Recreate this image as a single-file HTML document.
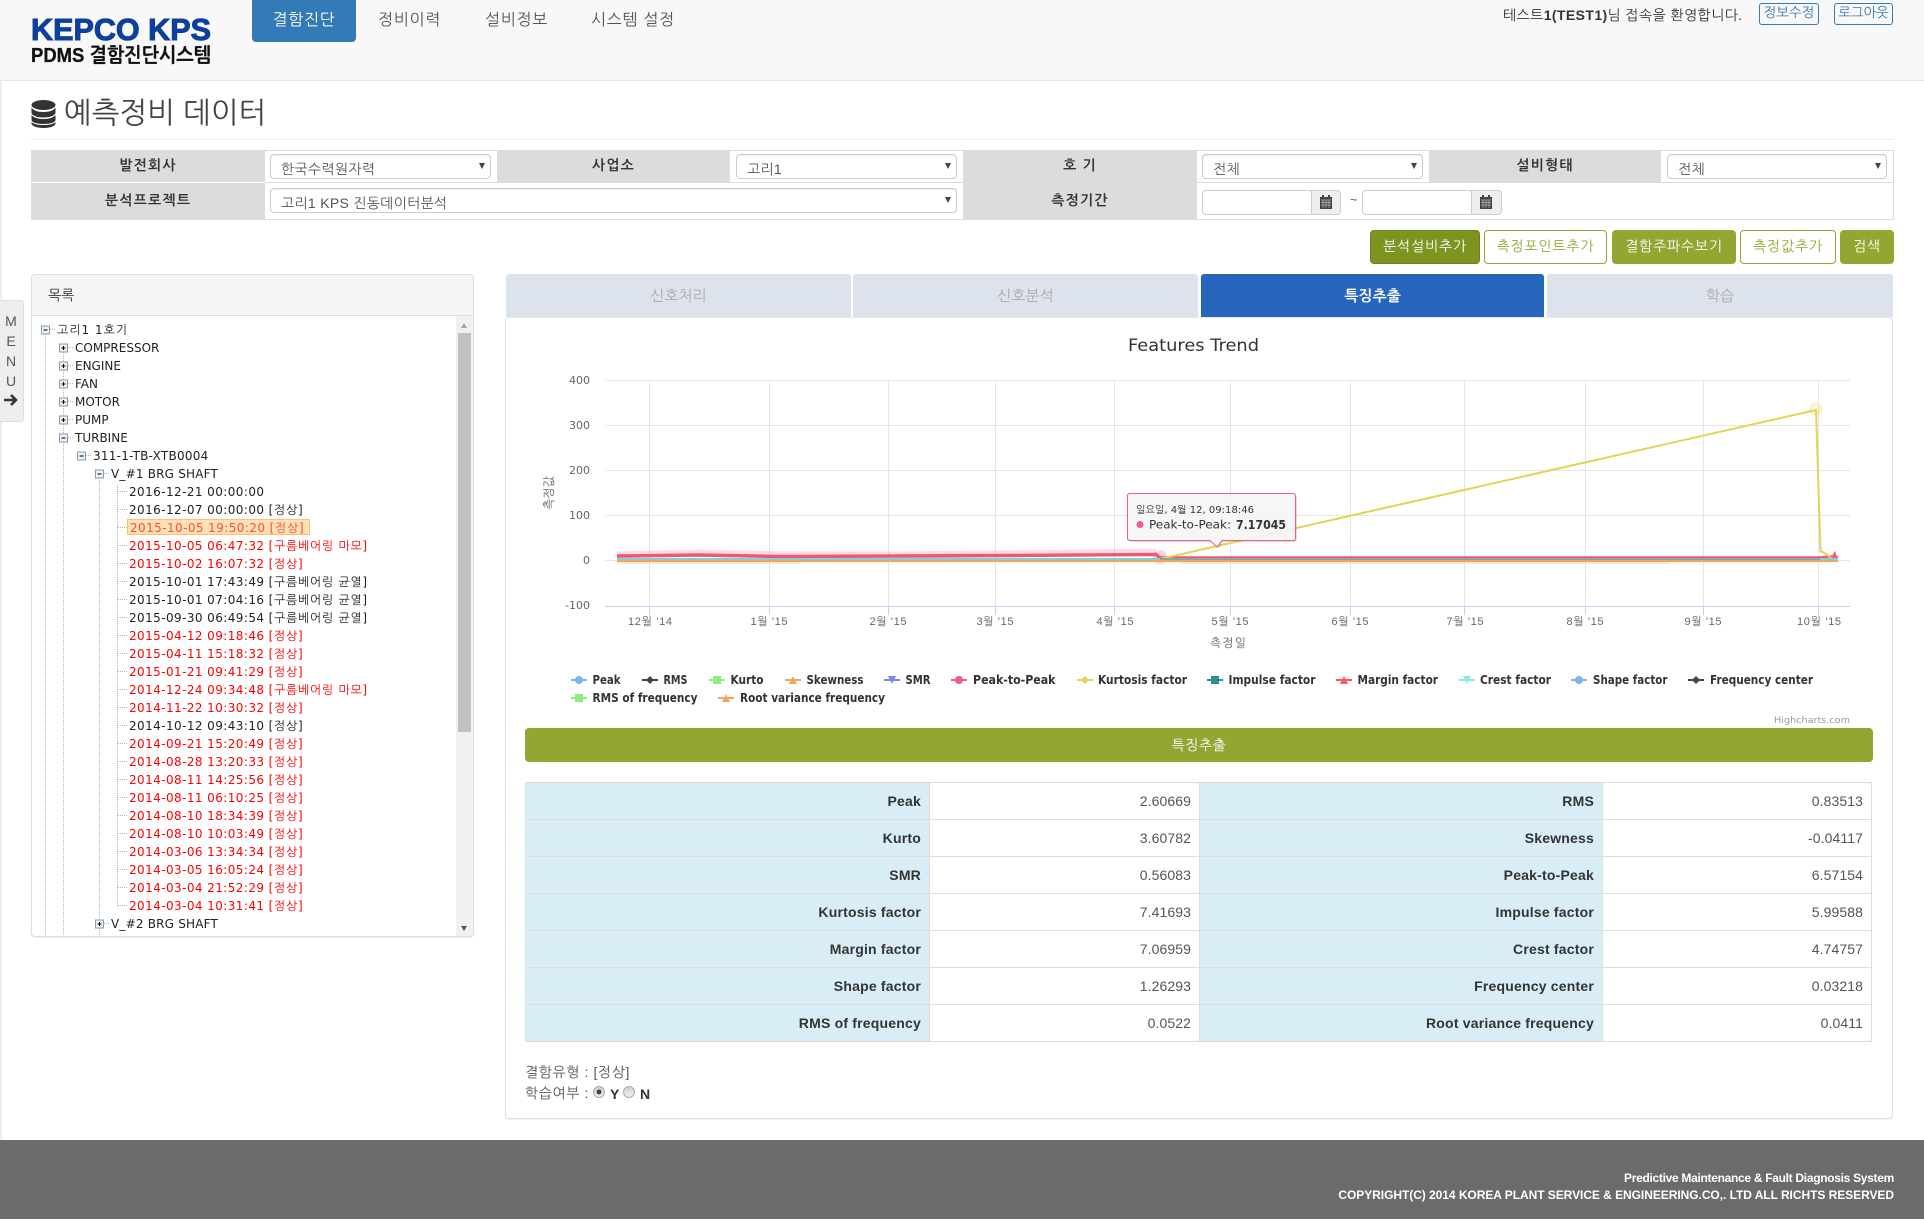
<!DOCTYPE html>
<html lang="ko">
<head>
<meta charset="utf-8">
<title>PDMS 결함진단시스템</title>
<style>
html,body{margin:0;padding:0;background:#fff}
body{width:1924px;height:1225px;position:relative;overflow:hidden;font-family:"Liberation Sans","NanumGothic","Noto Sans CJK KR",sans-serif;color:#333;font-size:14px}
.a{position:absolute;box-sizing:border-box;white-space:nowrap}
.c{text-align:center}
.lab{background:#dcdcdc;text-align:center;color:#333;font-weight:bold;font-size:14px;letter-spacing:1.2px}
.sel{background:#fff;border:1px solid #ccc;border-radius:4px;box-shadow:inset 0 1px 1px rgba(0,0,0,.08);height:25px;font-size:14px;letter-spacing:.3px;line-height:28px;padding-left:10px;color:#555}
.sel i{position:absolute;right:5px;top:8px;width:0;height:0;border-left:3px solid transparent;border-right:3px solid transparent;border-top:6px solid #444}
.btn{height:34px;border-radius:4px;border:1px solid #92a732;text-align:center;font-size:14px;letter-spacing:.8px;line-height:30px;top:230px}
.f{background:#92a732;color:#fff}
.o{background:#fff;color:#92a732}
.tab{top:274px;height:43px;background:#dde3ed;color:#aaa;text-align:center;font-size:15px;line-height:45px;border-radius:3px 3px 0 0}
.nav{font-size:16px;letter-spacing:.7px;line-height:22px;color:#555;top:10px}
.r{position:absolute;white-space:nowrap;font:12px/18px "DejaVu Sans","NanumGothic",sans-serif;color:#222;height:18px;transform:translateY(1px)}
.r:has(b){letter-spacing:.7px}
.r b{font-weight:normal;letter-spacing:.42px}
.red{color:#f00}
.th,.td{position:absolute;height:38px;border:1px solid #ddd;line-height:36px;text-align:right;padding-right:8px;box-sizing:border-box;white-space:nowrap}
.th{background:#d9edf7;font-weight:bold;color:#333;letter-spacing:.2px}
.td{background:#fff;color:#555;padding-right:8px;letter-spacing:.1px}
</style>
</head>
<body>
<!-- header -->
<div class="a" style="left:0;top:0;width:1924px;height:81px;background:#f8f8f8;border-bottom:1px solid #e7e7e7"></div>
<div class="a" style="left:0;top:81px;width:2px;height:1059px;background:#eee"></div>
<svg class="a" style="left:25px;top:10px" width="200" height="60">
<text x="6" y="30" font-family="Liberation Sans" font-weight="bold" font-size="31" fill="#0d3f9e" stroke="#0d3f9e" stroke-width="1" textLength="180" lengthAdjust="spacingAndGlyphs">KEPCO KPS</text>
<text x="6" y="52" font-family="Liberation Sans,NanumGothic,sans-serif" font-weight="bold" font-size="20" fill="#111" stroke="#111" stroke-width=".3" textLength="180" lengthAdjust="spacingAndGlyphs">PDMS 결함진단시스템</text>
</svg>
<div class="a c" style="left:252px;top:0;width:104px;height:42px;background:#337ab7;color:#fff;border-radius:0 0 4px 4px;font-size:16px;letter-spacing:.7px;line-height:42px">결함진단</div>
<div class="a nav" style="left:378px">정비이력</div>
<div class="a nav" style="left:485px">설비정보</div>
<div class="a nav" style="left:591px">시스템 설정</div>
<div class="a" style="left:1503px;top:6px;font-size:14px;letter-spacing:.4px;line-height:18px;color:#333">테스트<b>1(TEST1)</b>님 접속을 환영합니다.</div>
<div class="a c" style="left:1759px;top:3px;width:60px;height:22px;border:1px solid #337ab7;border-radius:3px;color:#337ab7;font-size:13.5px;line-height:17px">정보수정</div>
<div class="a c" style="left:1834px;top:3px;width:59px;height:22px;border:1px solid #337ab7;border-radius:3px;color:#337ab7;font-size:13.5px;line-height:17px">로그아웃</div>

<!-- title -->
<svg class="a" style="left:31px;top:100px" width="25" height="28" viewBox="0 0 25 28">
<ellipse cx="12.500" cy="5" rx="12" ry="5" fill="#333"/>
<path d="M.5 7.500c2 3 6 4.500 12 4.500s10-1.500 12-4.500v5c0 3-5.500 5-12 5s-12-2-12-5z" fill="#333"/>
<path d="M.5 15c2 2.500 6 4 12 4s10-1.500 12-4v5c0 2.500-5.500 4-12 4s-12-1.500-12-4z" fill="#333"/>
<path d="M.5 22c2 2 6 3 12 3s10-1 12-3v1.500c0 2.500-5.500 4.500-12 4.500s-12-2-12-4.500z" fill="#333"/>
</svg>
<div class="a" style="left:64px;top:94px;font-size:29.500px;line-height:40px;color:#444">예측정비 데이터</div>
<div class="a" style="left:31px;top:139px;width:1863px;height:1px;background:#eee"></div>

<!-- filter table -->
<div class="a" style="left:31px;top:150px;width:1863px;height:70px;border:1px solid #ddd;border-left:0"></div>
<div class="a" style="left:265px;top:182px;width:1629px;height:1px;background:#ddd"></div>
<div class="a lab" style="left:31px;top:150px;width:234px;height:32px;line-height:30px">발전회사</div>
<div class="a lab" style="left:31px;top:183px;width:234px;height:37px;line-height:34px">분석프로젝트</div>
<div class="a lab" style="left:497px;top:150px;width:233px;height:32px;line-height:30px">사업소</div>
<div class="a lab" style="left:963px;top:150px;width:234px;height:32px;line-height:30px">호 기</div>
<div class="a lab" style="left:963px;top:183px;width:234px;height:36px;line-height:34px">측정기간</div>
<div class="a lab" style="left:1429px;top:150px;width:232px;height:32px;line-height:30px">설비형태</div>
<div class="a sel" style="left:270px;top:154px;width:221px">한국수력원자력<i></i></div>
<div class="a sel" style="left:736px;top:154px;width:221px">고리1<i></i></div>
<div class="a sel" style="left:1202px;top:154px;width:221px">전체<i></i></div>
<div class="a sel" style="left:1667px;top:154px;width:220px">전체<i></i></div>
<div class="a sel" style="left:270px;top:188px;width:687px">고리1 KPS 진동데이터분석<i></i></div>
<div class="a" style="left:1202px;top:190px;width:110px;height:25px;border:1px solid #ccc;border-radius:4px 0 0 4px;background:#fff"></div>
<div class="a" style="left:1311px;top:190px;width:30px;height:25px;border:1px solid #ccc;border-radius:0 4px 4px 0;background:#eee"></div>
<div class="a" style="left:1350px;top:191px;font-size:13px;line-height:18px;color:#555">~</div>
<div class="a" style="left:1362px;top:190px;width:110px;height:25px;border:1px solid #ccc;border-radius:4px 0 0 4px;background:#fff"></div>
<div class="a" style="left:1471px;top:190px;width:31px;height:25px;border:1px solid #ccc;border-radius:0 4px 4px 0;background:#eee"></div>
<svg class="a" style="left:1320px;top:195px" width="14" height="15"><path d="M0 2h12v12H0z" fill="#444"/><path d="M1 5h10M1 7.500h10M1 10h10M3 5v8M6 5v8M9 5v8" stroke="#bbb" stroke-width=".7"/><path d="M2 0h2v3H2zM8 0h2v3H8z" fill="#444"/></svg>
<svg class="a" style="left:1480px;top:195px" width="14" height="15"><path d="M0 2h12v12H0z" fill="#444"/><path d="M1 5h10M1 7.500h10M1 10h10M3 5v8M6 5v8M9 5v8" stroke="#bbb" stroke-width=".7"/><path d="M2 0h2v3H2zM8 0h2v3H8z" fill="#444"/></svg>

<!-- buttons -->
<div class="a btn f" style="left:1370px;width:110px;background:#7d9421;border-color:#6d8219">분석설비추가</div>
<div class="a btn o" style="left:1484px;width:123px">측정포인트추가</div>
<div class="a btn f" style="left:1612px;width:124px">결함주파수보기</div>
<div class="a btn o" style="left:1740px;width:96px">측정값추가</div>
<div class="a btn f" style="left:1840px;width:54px">검색</div>

<!-- menu tab -->
<div class="a" style="left:0;top:300px;width:24px;height:122px;background:#eee;border:1px solid #ddd;border-left:0;border-radius:0 3px 3px 0"></div>
<div class="a c" style="left:0;top:311px;width:22px;font-size:14px;line-height:20px;color:#555;white-space:normal">M<br>E<br>N<br>U</div>
<svg class="a" style="left:4px;top:394px" width="14" height="12"><path d="M0 6h11M7 1l5 5-5 5" fill="none" stroke="#333" stroke-width="2.600"/></svg>

<!-- tree panel -->
<div class="a" style="left:31px;top:274px;width:443px;height:663px;border:1px solid #ddd;border-radius:4px;background:#fff;overflow:hidden;box-shadow:0 1px 1px rgba(0,0,0,.05)">
  <div style="height:41px;background:#f5f5f5;border-bottom:1px solid #ddd;box-sizing:border-box;padding-left:16px;font-size:14px;line-height:40px;color:#333">목록</div>
  <div style="position:absolute;left:424px;top:41px;width:17px;height:621px;background:#f1f1f1"></div>
  <div style="position:absolute;left:426px;top:58px;width:13px;height:399px;background:#c1c1c1"></div>
  <div style="position:absolute;left:429px;top:48px;border-left:3.500px solid transparent;border-right:3.500px solid transparent;border-bottom:5px solid #a5a5a5"></div>
  <div style="position:absolute;left:429px;top:651px;border-left:3.500px solid transparent;border-right:3.500px solid transparent;border-top:5px solid #505050"></div>
</div>
<svg class="a" style="left:0;top:320px" width="320" height="616">
<g fill="none" stroke="#b5b5b5" stroke-width="1" stroke-dasharray="1 1">
<path d="M45.500 14V616M63.500 32V616M99.500 158V616M117.500 165V587"/>
<path d="M50 9.500h6M68 27.500h6M68 45.500h6M68 63.500h6M68 81.500h6M68 99.500h6M68 117.500h6M86 135.500h6M104 153.500h6M104 603.500h6"/>
<path d="M118 171.500h9M118 189.500h9M118 207.500h9M118 225.500h9M118 243.500h9M118 261.500h9M118 279.500h9M118 297.500h9M118 315.500h9M118 333.500h9M118 351.500h9M118 369.500h9M118 387.500h9M118 405.500h9M118 423.500h9M118 441.500h9M118 459.500h9M118 477.500h9M118 495.500h9M118 513.500h9M118 531.500h9M118 549.500h9M118 567.500h9M118 585.500h9"/>
</g>
<g fill="#f0f0f0" stroke="#7f9db9">
<rect x="41.500" y="6" width="8" height="8"/>
<rect x="59.500" y="24" width="8" height="8"/><rect x="59.500" y="42" width="8" height="8"/><rect x="59.500" y="60" width="8" height="8"/><rect x="59.500" y="78" width="8" height="8"/><rect x="59.500" y="96" width="8" height="8"/><rect x="59.500" y="114" width="8" height="8"/>
<rect x="77.500" y="132" width="8" height="8"/>
<rect x="95.500" y="150" width="8" height="8"/>
<rect x="95.500" y="600" width="8" height="8"/>
</g>
<path d="M43.500 10.500h4M61.500 28.500h4M63.500 26.500v4M61.500 46.500h4M63.500 44.500v4M61.500 64.500h4M63.500 62.500v4M61.500 82.500h4M63.500 80.500v4M61.500 100.500h4M63.500 98.500v4M61.500 118.500h4M79.500 136.500h4M97.500 154.500h4M97.500 604.500h4M99.500 602.500v4" stroke="#000" stroke-width="1" transform="translate(0,-.5)"/>
</svg>
<div class="a" style="left:127px;top:519px;width:183px;height:16px;background:#ffdfb3;border:1px solid #fbc274"></div>
<div class="r" style="left:57px;top:320px;letter-spacing:1px">고리1 1호기</div>
<div class="r" style="left:75px;top:338px">COMPRESSOR</div>
<div class="r" style="left:75px;top:356px">ENGINE</div>
<div class="r" style="left:75px;top:374px">FAN</div>
<div class="r" style="left:75px;top:392px">MOTOR</div>
<div class="r" style="left:75px;top:410px">PUMP</div>
<div class="r" style="left:75px;top:428px">TURBINE</div>
<div class="r" style="left:93px;top:446px;letter-spacing:.25px">311-1-TB-XTB0004</div>
<div class="r" style="left:111px;top:464px;letter-spacing:.2px">V_#1 BRG SHAFT</div>
<div class="r" style="left:129px;top:482px"><b>2016-12-21 00:00:00</b></div>
<div class="r" style="left:129px;top:500px"><b>2016-12-07 00:00:00 </b>[정상]</div>
<div class="r" style="left:130px;top:518px;color:#f4543c"><b>2015-10-05 19:50:20 </b>[정상]</div>
<div class="r red" style="left:129px;top:536px"><b>2015-10-05 06:47:32 </b>[구름베어링 마모]</div>
<div class="r red" style="left:129px;top:554px"><b>2015-10-02 16:07:32 </b>[정상]</div>
<div class="r" style="left:129px;top:572px"><b>2015-10-01 17:43:49 </b>[구름베어링 균열]</div>
<div class="r" style="left:129px;top:590px"><b>2015-10-01 07:04:16 </b>[구름베어링 균열]</div>
<div class="r" style="left:129px;top:608px"><b>2015-09-30 06:49:54 </b>[구름베어링 균열]</div>
<div class="r red" style="left:129px;top:626px"><b>2015-04-12 09:18:46 </b>[정상]</div>
<div class="r red" style="left:129px;top:644px"><b>2015-04-11 15:18:32 </b>[정상]</div>
<div class="r red" style="left:129px;top:662px"><b>2015-01-21 09:41:29 </b>[정상]</div>
<div class="r red" style="left:129px;top:680px"><b>2014-12-24 09:34:48 </b>[구름베어링 마모]</div>
<div class="r red" style="left:129px;top:698px"><b>2014-11-22 10:30:32 </b>[정상]</div>
<div class="r" style="left:129px;top:716px"><b>2014-10-12 09:43:10 </b>[정상]</div>
<div class="r red" style="left:129px;top:734px"><b>2014-09-21 15:20:49 </b>[정상]</div>
<div class="r red" style="left:129px;top:752px"><b>2014-08-28 13:20:33 </b>[정상]</div>
<div class="r red" style="left:129px;top:770px"><b>2014-08-11 14:25:56 </b>[정상]</div>
<div class="r red" style="left:129px;top:788px"><b>2014-08-11 06:10:25 </b>[정상]</div>
<div class="r red" style="left:129px;top:806px"><b>2014-08-10 18:34:39 </b>[정상]</div>
<div class="r red" style="left:129px;top:824px"><b>2014-08-10 10:03:49 </b>[정상]</div>
<div class="r red" style="left:129px;top:842px"><b>2014-03-06 13:34:34 </b>[정상]</div>
<div class="r red" style="left:129px;top:860px"><b>2014-03-05 16:05:24 </b>[정상]</div>
<div class="r red" style="left:129px;top:878px"><b>2014-03-04 21:52:29 </b>[정상]</div>
<div class="r red" style="left:129px;top:896px"><b>2014-03-04 10:31:41 </b>[정상]</div>
<div class="r" style="left:111px;top:914px;letter-spacing:.2px">V_#2 BRG SHAFT</div>

<!-- tabs -->
<div class="a tab" style="left:506px;width:345px">신호처리</div>
<div class="a tab" style="left:853px;width:345px">신호분석</div>
<div class="a tab" style="left:1201px;width:343px;background:#2666bd;color:#fff;font-weight:bold">특징추출</div>
<div class="a tab" style="left:1547px;width:346px">학습</div>

<!-- main panel -->
<div class="a" style="left:505px;top:317px;width:1388px;height:802px;border:1px solid #ddd;border-top-color:#e8e8e8;border-radius:4px;background:#fff;box-shadow:0 1px 1px rgba(0,0,0,.05)"></div>

<!-- chart -->
<svg class="a" style="left:0;top:0" width="1924" height="780" font-family="DejaVu Sans,NanumGothic,sans-serif">
<text x="1128" y="351" font-size="17" fill="#333" textLength="131" lengthAdjust="spacingAndGlyphs">Features Trend</text>
<g stroke="#e6e6e6" stroke-width="1">
<path d="M605 380.500H1850M605 425.500H1850M605 470.500H1850M605 515.500H1850M605 560.500H1850"/>
<path d="M649.500 381V606M769.500 381V606M888.500 381V606M995.500 381V606M1114.500 381V606M1230.500 381V606M1350.500 381V606M1464.500 381V606M1585.500 381V606M1703.500 381V606M1818.500 381V606"/>
</g>
<path d="M605 606.500H1850" stroke="#c5d3ea" stroke-width="1"/>
<g stroke="#c5d3ea"><path d="M649.500 606v9M769.500 606v9M888.500 606v9M995.500 606v9M1114.500 606v9M1230.500 606v9M1350.500 606v9M1464.500 606v9M1585.500 606v9M1703.500 606v9M1818.500 606v9"/></g>
<g font-size="11" fill="#666" text-anchor="end">
<text x="590" y="384">400</text><text x="590" y="429">300</text><text x="590" y="474">200</text><text x="590" y="519">100</text><text x="590" y="564">0</text><text x="590" y="609">-100</text>
</g>
<g font-size="11" fill="#666" text-anchor="middle" font-family="Liberation Sans,NanumGothic,sans-serif">
<text x="650" y="625" textLength="44" lengthAdjust="spacing">12월 '14</text><text x="769" y="625" textLength="37">1월 '15</text><text x="888" y="625" textLength="37">2월 '15</text><text x="995" y="625" textLength="37">3월 '15</text><text x="1115" y="625" textLength="37">4월 '15</text><text x="1230" y="625" textLength="37">5월 '15</text><text x="1350" y="625" textLength="37">6월 '15</text><text x="1465" y="625" textLength="37">7월 '15</text><text x="1585" y="625" textLength="37">8월 '15</text><text x="1703" y="625" textLength="37">9월 '15</text><text x="1819" y="625" textLength="44">10월 '15</text>
<text x="1228" y="647" font-size="12" textLength="36">측정일</text>
</g>
<text transform="translate(553,493) rotate(-90)" font-size="12" fill="#666" text-anchor="middle" font-family="Liberation Sans,NanumGothic,sans-serif">측정값</text>
<!-- series -->
<path d="M617 555L700 553L780 555L900 555L1000 554L1156 552" fill="none" stroke="#f15c80" stroke-width="7" opacity=".22"/>
<circle cx="1160" cy="557" r="7" fill="#f15c80" opacity=".28"/>
<circle cx="1816" cy="409" r="7" fill="#e4d354" opacity=".25"/>
<path d="M617 556L700 555L780 556.500L900 556L1000 555.500L1156 554.500L1160 558L1820 558L1830 557L1838 558" fill="none" stroke="#f0557a" stroke-width="3.400"/>
<path d="M1830 559L1835 551L1838 559z" fill="#f15c80"/>
<path d="M1160 559L1816 410L1820.500 551L1826 554L1832 559" fill="none" stroke="#e4d354" stroke-width="2"/>
<path d="M617 559H1838" stroke="#8aa5a5" stroke-width="2"/>
<path d="M617 559H1160M1820 559H1838" stroke="#7fd3cf" stroke-width="2"/>
<path d="M617 561H1838" stroke="#f7a35c" stroke-width="2"/>
<path d="M617 563H800M1180 563H1670" stroke="#f7a35c" stroke-width="2" opacity=".2"/>
<!-- tooltip -->
<path d="M1130 493.500H1293Q1295.500 493.500 1295.500 496V538Q1295.500 540.500 1293 540.500H1222L1217 547L1210 540.500H1130Q1127.500 540.500 1127.500 538V496Q1127.500 493.500 1130 493.500Z" fill="#000" opacity=".12" transform="translate(1.500,1.500)"/>
<path d="M1130 493.500H1293Q1295.500 493.500 1295.500 496V538Q1295.500 540.500 1293 540.500H1222L1217 547L1210 540.500H1130Q1127.500 540.500 1127.500 538V496Q1127.500 493.500 1130 493.500Z" fill="#f8f8f8" fill-opacity=".93" stroke="#f15c80"/>
<text x="1136" y="513" font-size="10" fill="#333" textLength="118" lengthAdjust="spacingAndGlyphs">일요일, 4월 12, 09:18:46</text>
<circle cx="1140" cy="524.500" r="3.500" fill="#f15c80"/>
<text x="1149" y="528.500" font-size="11.500" fill="#333" textLength="82" lengthAdjust="spacingAndGlyphs">Peak-to-Peak:</text>
<text x="1236" y="529" font-size="12.500" font-weight="bold" fill="#333" textLength="50" lengthAdjust="spacingAndGlyphs">7.17045</text>
<!-- legend -->
<g font-size="12" font-weight="bold" fill="#333">
<text x="592.500" y="684" textLength="28" lengthAdjust="spacingAndGlyphs">Peak</text>
<text x="663.500" y="684" textLength="24" lengthAdjust="spacingAndGlyphs">RMS</text>
<text x="730.500" y="684" textLength="33" lengthAdjust="spacingAndGlyphs">Kurto</text>
<text x="806.500" y="684" textLength="57" lengthAdjust="spacingAndGlyphs">Skewness</text>
<text x="905.500" y="684" textLength="25" lengthAdjust="spacingAndGlyphs">SMR</text>
<text x="973" y="684" textLength="82.500" lengthAdjust="spacingAndGlyphs">Peak-to-Peak</text>
<text x="1098" y="684" textLength="89" lengthAdjust="spacingAndGlyphs">Kurtosis factor</text>
<text x="1228.500" y="684" textLength="87" lengthAdjust="spacingAndGlyphs">Impulse factor</text>
<text x="1357.500" y="684" textLength="80.500" lengthAdjust="spacingAndGlyphs">Margin factor</text>
<text x="1480" y="684" textLength="71" lengthAdjust="spacingAndGlyphs">Crest factor</text>
<text x="1593" y="684" textLength="74.500" lengthAdjust="spacingAndGlyphs">Shape factor</text>
<text x="1710" y="684" textLength="103" lengthAdjust="spacingAndGlyphs">Frequency center</text>
<text x="592.500" y="702" textLength="105" lengthAdjust="spacingAndGlyphs">RMS of frequency</text>
<text x="740" y="702" textLength="145" lengthAdjust="spacingAndGlyphs">Root variance frequency</text>
</g>
<g stroke-width="2">
<path d="M571 680h16" stroke="#7cb5ec"/><circle cx="579" cy="680" r="4" fill="#7cb5ec"/>
<path d="M642 680h16" stroke="#434348"/><path d="M650 676l4 4-4 4-4-4z" fill="#434348"/>
<path d="M709 680h16" stroke="#90ed7d"/><path d="M713 676h8v8h-8z" fill="#90ed7d"/>
<path d="M785 680h16" stroke="#f7a35c"/><path d="M793 676l4 8h-8z" fill="#f7a35c"/>
<path d="M884 680h16" stroke="#8085e9"/><path d="M888 676h8l-4 8z" fill="#8085e9"/>
<path d="M951 680h16" stroke="#f15c80"/><circle cx="959" cy="680" r="4" fill="#f15c80"/>
<path d="M1077 680h16" stroke="#e4d354"/><path d="M1085 676l4 4-4 4-4-4z" fill="#e4d354"/>
<path d="M1207 680h16" stroke="#2b908f"/><path d="M1211 676h8v8h-8z" fill="#2b908f"/>
<path d="M1336 680h16" stroke="#f45b5b"/><path d="M1344 676l4 8h-8z" fill="#f45b5b"/>
<path d="M1459 680h16" stroke="#91e8e1"/><path d="M1463 676h8l-4 8z" fill="#91e8e1"/>
<path d="M1571 680h16" stroke="#7cb5ec"/><circle cx="1579" cy="680" r="4" fill="#7cb5ec"/>
<path d="M1688 680h16" stroke="#434348"/><path d="M1696 676l4 4-4 4-4-4z" fill="#434348"/>
<path d="M571 698h16" stroke="#90ed7d"/><path d="M575 694h8v8h-8z" fill="#90ed7d"/>
<path d="M718 698h16" stroke="#f7a35c"/><path d="M726 694l4 8h-8z" fill="#f7a35c"/>
</g>
<text x="1850" y="723" font-size="9" fill="#999" text-anchor="end" textLength="76" lengthAdjust="spacingAndGlyphs">Highcharts.com</text>
</svg>

<div class="a c" style="left:525px;top:728px;width:1348px;height:34px;background:#92a732;border-radius:4px;color:#fff;font-size:14px;letter-spacing:.5px;line-height:34px">특징추출</div>

<!-- data table -->
<div class="th" style="left:525px;top:782px;width:405px">Peak</div><div class="td" style="left:929px;top:782px;width:271px">2.60669</div><div class="th" style="left:1199px;top:782px;width:404px">RMS</div><div class="td" style="left:1602px;top:782px;width:270px">0.83513</div>
<div class="th" style="left:525px;top:819px;width:405px">Kurto</div><div class="td" style="left:929px;top:819px;width:271px">3.60782</div><div class="th" style="left:1199px;top:819px;width:404px">Skewness</div><div class="td" style="left:1602px;top:819px;width:270px">-0.04117</div>
<div class="th" style="left:525px;top:856px;width:405px">SMR</div><div class="td" style="left:929px;top:856px;width:271px">0.56083</div><div class="th" style="left:1199px;top:856px;width:404px">Peak-to-Peak</div><div class="td" style="left:1602px;top:856px;width:270px">6.57154</div>
<div class="th" style="left:525px;top:893px;width:405px">Kurtosis factor</div><div class="td" style="left:929px;top:893px;width:271px">7.41693</div><div class="th" style="left:1199px;top:893px;width:404px">Impulse factor</div><div class="td" style="left:1602px;top:893px;width:270px">5.99588</div>
<div class="th" style="left:525px;top:930px;width:405px">Margin factor</div><div class="td" style="left:929px;top:930px;width:271px">7.06959</div><div class="th" style="left:1199px;top:930px;width:404px">Crest factor</div><div class="td" style="left:1602px;top:930px;width:270px">4.74757</div>
<div class="th" style="left:525px;top:967px;width:405px">Shape factor</div><div class="td" style="left:929px;top:967px;width:271px">1.26293</div><div class="th" style="left:1199px;top:967px;width:404px">Frequency center</div><div class="td" style="left:1602px;top:967px;width:270px">0.03218</div>
<div class="th" style="left:525px;top:1004px;width:405px">RMS of frequency</div><div class="td" style="left:929px;top:1004px;width:271px">0.0522</div><div class="th" style="left:1199px;top:1004px;width:404px">Root variance frequency</div><div class="td" style="left:1602px;top:1004px;width:270px">0.0411</div>

<div class="a" style="left:525px;top:1062px;font-size:14px;letter-spacing:.6px;line-height:20px;color:#555">결함유형 : [정상]</div>
<div class="a" style="left:525px;top:1083px;font-size:14px;letter-spacing:.6px;line-height:20px;color:#555">학습여부 :</div>
<svg class="a" style="left:592px;top:1085px" width="46" height="14"><defs><linearGradient id="g" x1="0" y1="0" x2="0" y2="1"><stop offset="0" stop-color="#ccc"/><stop offset="1" stop-color="#f4f4f4"/></linearGradient></defs><circle cx="7" cy="7" r="5.500" fill="url(#g)" stroke="#aaa"/><circle cx="7" cy="7" r="2.500" fill="#444"/><circle cx="37" cy="7" r="5.500" fill="url(#g)" stroke="#aaa"/></svg>
<div class="a" style="left:610px;top:1084px;font-size:14px;line-height:20px;font-weight:bold;color:#333">Y</div>
<div class="a" style="left:640px;top:1084px;font-size:14px;line-height:20px;font-weight:bold;color:#333">N</div>

<!-- footer -->
<div class="a" style="left:0;top:1140px;width:1924px;height:79px;background:#6b6b6b"></div>
<div class="a" style="right:30px;top:1170px;font-size:12px;line-height:17px;color:#fff;font-weight:bold;text-align:right"><span style="letter-spacing:-.3px">Predictive Maintenance &amp; Fault Diagnosis System</span><br><span style="letter-spacing:-.05px">COPYRIGHT(C) 2014 KOREA PLANT SERVICE &amp; ENGINEERING.CO,. LTD ALL RICHTS RESERVED</span></div>
</body>
</html>
